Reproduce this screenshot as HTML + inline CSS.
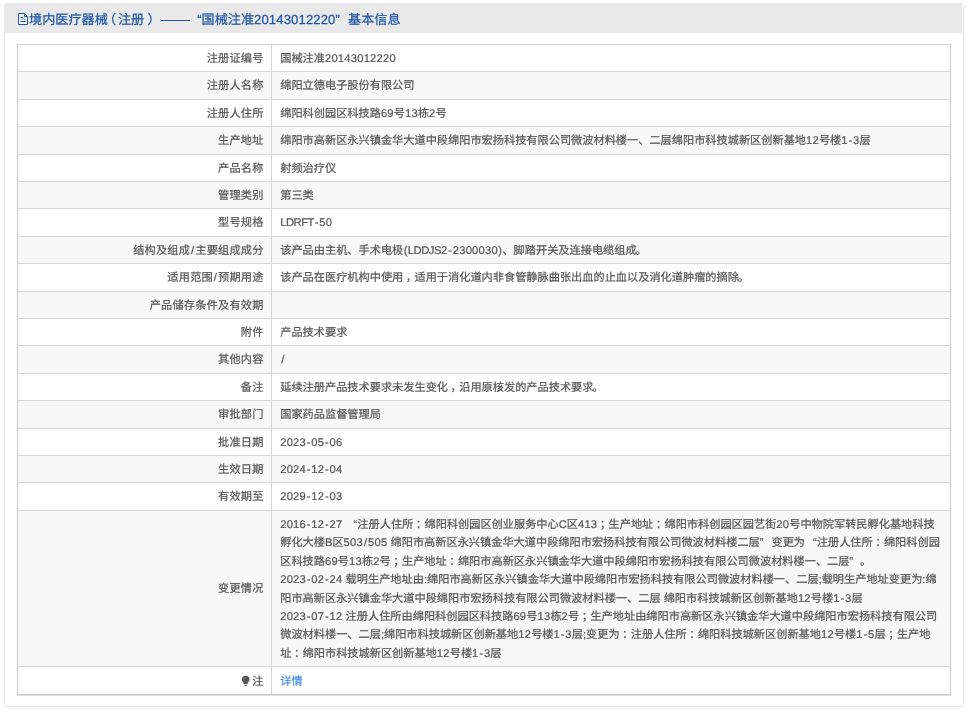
<!DOCTYPE html>
<html lang="zh-CN"><head><meta charset="utf-8"><title>基本信息</title>
<style>
html,body{margin:0;padding:0;background:#fff;}
body{width:972px;height:723px;position:relative;overflow:hidden;font-family:"Liberation Sans",sans-serif;font-size:11.2px;color:#555;text-rendering:geometricPrecision;}
.panel{position:absolute;left:4px;top:3px;width:960px;height:704px;box-sizing:border-box;background:#fff;border:1px solid #ebebeb;border-radius:3px;box-shadow:0 1px 4px rgba(0,0,0,.06);}
.hd{position:absolute;left:5px;top:4px;width:957px;height:29px;background:#e9e9e9;border-radius:2px 2px 0 0;}
.ttl{will-change:transform;-webkit-text-stroke-width:.25px;position:absolute;left:29.2px;top:3px;height:32px;line-height:34.2px;font-size:13.125px;color:#2058a8;white-space:nowrap;}
.row{position:absolute;left:17px;width:934px;border-top:1px solid #d6d6d6;box-sizing:border-box;}
.g{background:#f8f8f8;}
.tx{-webkit-text-stroke-width:.2px;position:absolute;left:0;top:0;width:972px;height:723px;will-change:transform;}
.l,.v{position:absolute;height:18px;line-height:18px;white-space:nowrap;overflow:hidden;}
.l{left:17px;width:246.5px;text-align:right;}
.v{left:280.2px;width:668px;}
.vl{position:absolute;left:271px;top:44px;width:1px;height:651px;background:#d6d6d6;}
.bl{position:absolute;left:17px;top:44px;width:1px;height:651px;background:#cfcfcf;}
.br{position:absolute;left:950px;top:44px;width:1px;height:651px;background:#cfcfcf;}
.bb{position:absolute;left:17px;top:694px;width:934px;height:1px;background:#c9c9c9;border-bottom:1px solid #dedede;}
.ds{display:inline-block;width:29.4px;height:1px;margin-left:.5px;background:#2058a8;vertical-align:3px}
.q{margin-left:8px}.q2{margin-right:8px}
a{color:#4a90e2;text-decoration:none;}
i{font-style:normal;letter-spacing:.23px}s{text-decoration:none;margin:0 1px}tt{font-family:inherit;margin:0 .4px}c{display:inline-block;width:11.2px;text-align:center}.ttl c{width:13.125px}.l c{width:11.4px}
em{font-style:normal;position:relative;left:2.5px}em.k{left:-1.2px}b{font-weight:normal;margin:0 .8px}u{text-decoration:none;letter-spacing:-.45px}
</style></head><body>
<div class="panel"></div><div class="hd"></div>
<div class="ttl"><c>境</c><c>内</c><c>医</c><c>疗</c><c>器</c><c>械</c><c style="position:relative;left:-4.7px;margin-right:-3px">（</c><c>注</c><c>册</c><c style="position:relative;left:3.3px;margin-right:3px">）</c><span class="ds"></span><span style="margin-left:7px">“</span><c>国</c><c>械</c><c>注</c><c>准</c><span style="letter-spacing:.12px">20143012220</span><span style="margin-right:8.2px">”</span><c>基</c><c>本</c><c>信</c><c>息</c></div>
<svg style="position:absolute;left:18px;top:13px" width="10" height="12" viewBox="0 0 10 12"><path d="M0.5 0.5H6.5L9.5 3.5V11.5H0.5Z M6.5 0.5V3.5H9.5" fill="#eef2fb" stroke="#2058a8" stroke-width="1"/><path d="M2.5 4.5H5M2.5 8.5H7.5" stroke="#2058a8" stroke-width="1"/><path d="M2.5 6.5H7.5" stroke="#9db6dc" stroke-width="1"/></svg>

<div class="row" style="top:44px;height:27.4px"></div>
<div class="row g" style="top:71.4px;height:27.4px"></div>
<div class="row" style="top:98.8px;height:27.4px"></div>
<div class="row g" style="top:126.2px;height:27.4px"></div>
<div class="row" style="top:153.6px;height:27.4px"></div>
<div class="row g" style="top:181px;height:27.4px"></div>
<div class="row" style="top:208.4px;height:27.4px"></div>
<div class="row g" style="top:235.8px;height:27.4px"></div>
<div class="row" style="top:263.2px;height:27.4px"></div>
<div class="row g" style="top:290.6px;height:27.4px"></div>
<div class="row" style="top:318px;height:27.4px"></div>
<div class="row g" style="top:345.4px;height:27.4px"></div>
<div class="row" style="top:372.8px;height:27.4px"></div>
<div class="row g" style="top:400.2px;height:27.4px"></div>
<div class="row" style="top:427.6px;height:27.4px"></div>
<div class="row g" style="top:455px;height:27.4px"></div>
<div class="row" style="top:482.4px;height:27.4px"></div>
<div class="row g" style="top:509.8px;height:156.2px"></div>
<div class="row" style="top:666px;height:28px"></div>
<div class="vl"></div><div class="bl"></div><div class="br"></div><div class="bb"></div>
<div class="tx">
<div class="l" style="top:50px"><c>注</c><c>册</c><c>证</c><c>编</c><c>号</c></div>
<div class="v" style="top:50px"><c>国</c><c>械</c><c>注</c><c>准</c><i>20143012220</i></div>
<div class="l" style="top:77px"><c>注</c><c>册</c><c>人</c><c>名</c><c>称</c></div>
<div class="v" style="top:77px"><c>绵</c><c>阳</c><c>立</c><c>德</c><c>电</c><c>子</c><c>股</c><c>份</c><c>有</c><c>限</c><c>公</c><c>司</c></div>
<div class="l" style="top:105px"><c>注</c><c>册</c><c>人</c><c>住</c><c>所</c></div>
<div class="v" style="top:105px"><c>绵</c><c>阳</c><c>科</c><c>创</c><c>园</c><c>区</c><c>科</c><c>技</c><c>路</c><i>69</i><c>号</c><i>13</i><c>栋</c><i>2</i><c>号</c></div>
<div class="l" style="top:132px"><c>生</c><c>产</c><c>地</c><c>址</c></div>
<div class="v" style="top:132px"><c>绵</c><c>阳</c><c>市</c><c>高</c><c>新</c><c>区</c><c>永</c><c>兴</c><c>镇</c><c>金</c><c>华</c><c>大</c><c>道</c><c>中</c><c>段</c><c>绵</c><c>阳</c><c>市</c><c>宏</c><c>扬</c><c>科</c><c>技</c><c>有</c><c>限</c><c>公</c><c>司</c><c>微</c><c>波</c><c>材</c><c>料</c><c>楼</c><c>一</c><c>、</c><c>二</c><c>层</c><c>绵</c><c>阳</c><c>市</c><c>科</c><c>技</c><c>城</c><c>新</c><c>区</c><c>创</c><c>新</c><c>基</c><c>地</c><i>12</i><c>号</c><c>楼</c><i>1</i><b>-</b><i>3</i><c>层</c></div>
<div class="l" style="top:160px"><c>产</c><c>品</c><c>名</c><c>称</c></div>
<div class="v" style="top:160px"><c>射</c><c>频</c><c>治</c><c>疗</c><c>仪</c></div>
<div class="l" style="top:187px"><c>管</c><c>理</c><c>类</c><c>别</c></div>
<div class="v" style="top:187px"><c>第</c><c>三</c><c>类</c></div>
<div class="l" style="top:214px"><c>型</c><c>号</c><c>规</c><c>格</c></div>
<div class="v" style="top:214px"><u>LDRFT</u><b>-</b><i>50</i></div>
<div class="l" style="top:242px"><c>结</c><c>构</c><c>及</c><c>组</c><c>成</c><s>/</s><c>主</c><c>要</c><c>组</c><c>成</c><c>成</c><c>分</c></div>
<div class="v" style="top:242px"><c>该</c><c>产</c><c>品</c><c>由</c><c>主</c><c>机</c><c>、</c><c>手</c><c>术</c><c>电</c><c>极</c><tt>(</tt><u>LDDJS</u><i>2</i><b>-</b><i>2300030</i><tt>)</tt><c>、</c><c>脚</c><c>踏</c><c>开</c><c>关</c><c>及</c><c>连</c><c>接</c><c>电</c><c>缆</c><c>组</c><c>成</c><em class="k"><c>。</c></em></div>
<div class="l" style="top:269px"><c>适</c><c>用</c><c>范</c><c>围</c><s>/</s><c>预</c><c>期</c><c>用</c><c>途</c></div>
<div class="v" style="top:269px"><c>该</c><c>产</c><c>品</c><c>在</c><c>医</c><c>疗</c><c>机</c><c>构</c><c>中</c><c>使</c><c>用</c><em><c>，</c></em><c>适</c><c>用</c><c>于</c><c>消</c><c>化</c><c>道</c><c>内</c><c>非</c><c>食</c><c>管</c><c>静</c><c>脉</c><c>曲</c><c>张</c><c>出</c><c>血</c><c>的</c><c>止</c><c>血</c><c>以</c><c>及</c><c>消</c><c>化</c><c>道</c><c>肿</c><c>瘤</c><c>的</c><c>摘</c><c>除</c><em class="k"><c>。</c></em></div>
<div class="l" style="top:297px"><c>产</c><c>品</c><c>储</c><c>存</c><c>条</c><c>件</c><c>及</c><c>有</c><c>效</c><c>期</c></div>
<div class="l" style="top:324px"><c>附</c><c>件</c></div>
<div class="v" style="top:324px"><c>产</c><c>品</c><c>技</c><c>术</c><c>要</c><c>求</c></div>
<div class="l" style="top:351px"><c>其</c><c>他</c><c>内</c><c>容</c></div>
<div class="v" style="top:351px"><s>/</s></div>
<div class="l" style="top:379px"><c>备</c><c>注</c></div>
<div class="v" style="top:379px"><c>延</c><c>续</c><c>注</c><c>册</c><c>产</c><c>品</c><c>技</c><c>术</c><c>要</c><c>求</c><c>未</c><c>发</c><c>生</c><c>变</c><c>化</c><em><c>，</c></em><c>沿</c><c>用</c><c>原</c><c>核</c><c>发</c><c>的</c><c>产</c><c>品</c><c>技</c><c>术</c><c>要</c><c>求</c><em class="k"><c>。</c></em></div>
<div class="l" style="top:406px"><c>审</c><c>批</c><c>部</c><c>门</c></div>
<div class="v" style="top:406px"><c>国</c><c>家</c><c>药</c><c>品</c><c>监</c><c>督</c><c>管</c><c>理</c><c>局</c></div>
<div class="l" style="top:434px"><c>批</c><c>准</c><c>日</c><c>期</c></div>
<div class="v" style="top:434px"><i>2023</i><b>-</b><i>05</i><b>-</b><i>06</i></div>
<div class="l" style="top:461px"><c>生</c><c>效</c><c>日</c><c>期</c></div>
<div class="v" style="top:461px"><i>2024</i><b>-</b><i>12</i><b>-</b><i>04</i></div>
<div class="l" style="top:488px"><c>有</c><c>效</c><c>期</c><c>至</c></div>
<div class="v" style="top:488px"><i>2029</i><b>-</b><i>12</i><b>-</b><i>03</i></div>
<div class="l" style="top:580px"><c>变</c><c>更</c><c>情</c><c>况</c></div>
<div class="v" style="top:516px"><i>2016</i><b>-</b><i>12</i><b>-</b><i>27</i> <span class="q">“</span><c>注</c><c>册</c><c>人</c><c>住</c><c>所</c><em><c>：</c></em><c>绵</c><c>阳</c><c>科</c><c>创</c><c>园</c><c>区</c><c>创</c><c>业</c><c>服</c><c>务</c><c>中</c><c>心</c>C<c>区</c><i>413</i><em><c>；</c></em><c>生</c><c>产</c><c>地</c><c>址</c><em><c>：</c></em><c>绵</c><c>阳</c><c>市</c><c>科</c><c>创</c><c>园</c><c>区</c><c>园</c><c>艺</c><c>街</c><i>20</i><c>号</c><c>中</c><c>物</c><c>院</c><c>军</c><c>转</c><c>民</c><c>孵</c><c>化</c><c>基</c><c>地</c><c>科</c><c>技</c></div>
<div class="v" style="top:534px"><c>孵</c><c>化</c><c>大</c><c>楼</c>B<c>区</c><i>503</i><s>/</s><i>505</i> <c>绵</c><c>阳</c><c>市</c><c>高</c><c>新</c><c>区</c><c>永</c><c>兴</c><c>镇</c><c>金</c><c>华</c><c>大</c><c>道</c><c>中</c><c>段</c><c>绵</c><c>阳</c><c>市</c><c>宏</c><c>扬</c><c>科</c><c>技</c><c>有</c><c>限</c><c>公</c><c>司</c><c>微</c><c>波</c><c>材</c><c>料</c><c>楼</c><c>二</c><c>层</c><span class="q2">”</span><c>变</c><c>更</c><c>为</c><span class="q">“</span><c>注</c><c>册</c><c>人</c><c>住</c><c>所</c><em><c>：</c></em><c>绵</c><c>阳</c><c>科</c><c>创</c><c>园</c></div>
<div class="v" style="top:553px"><c>区</c><c>科</c><c>技</c><c>路</c><i>69</i><c>号</c><i>13</i><c>栋</c><i>2</i><c>号</c><em><c>；</c></em><c>生</c><c>产</c><c>地</c><c>址</c><em><c>：</c></em><c>绵</c><c>阳</c><c>市</c><c>高</c><c>新</c><c>区</c><c>永</c><c>兴</c><c>镇</c><c>金</c><c>华</c><c>大</c><c>道</c><c>中</c><c>段</c><c>绵</c><c>阳</c><c>市</c><c>宏</c><c>扬</c><c>科</c><c>技</c><c>有</c><c>限</c><c>公</c><c>司</c><c>微</c><c>波</c><c>材</c><c>料</c><c>楼</c><c>一</c><c>、</c><c>二</c><c>层</c><span class="q2">”</span><em class="k"><c>。</c></em></div>
<div class="v" style="top:571px"><i>2023</i><b>-</b><i>02</i><b>-</b><i>24</i> <c>载</c><c>明</c><c>生</c><c>产</c><c>地</c><c>址</c><c>由</c>:<c>绵</c><c>阳</c><c>市</c><c>高</c><c>新</c><c>区</c><c>永</c><c>兴</c><c>镇</c><c>金</c><c>华</c><c>大</c><c>道</c><c>中</c><c>段</c><c>绵</c><c>阳</c><c>市</c><c>宏</c><c>扬</c><c>科</c><c>技</c><c>有</c><c>限</c><c>公</c><c>司</c><c>微</c><c>波</c><c>材</c><c>料</c><c>楼</c><c>一</c><c>、</c><c>二</c><c>层</c>;<c>载</c><c>明</c><c>生</c><c>产</c><c>地</c><c>址</c><c>变</c><c>更</c><c>为</c>:<c>绵</c></div>
<div class="v" style="top:590px"><c>阳</c><c>市</c><c>高</c><c>新</c><c>区</c><c>永</c><c>兴</c><c>镇</c><c>金</c><c>华</c><c>大</c><c>道</c><c>中</c><c>段</c><c>绵</c><c>阳</c><c>市</c><c>宏</c><c>扬</c><c>科</c><c>技</c><c>有</c><c>限</c><c>公</c><c>司</c><c>微</c><c>波</c><c>材</c><c>料</c><c>楼</c><c>一</c><c>、</c><c>二</c><c>层</c> <c>绵</c><c>阳</c><c>市</c><c>科</c><c>技</c><c>城</c><c>新</c><c>区</c><c>创</c><c>新</c><c>基</c><c>地</c><i>12</i><c>号</c><c>楼</c><i>1</i><b>-</b><i>3</i><c>层</c></div>
<div class="v" style="top:608px"><i>2023</i><b>-</b><i>07</i><b>-</b><i>12</i> <c>注</c><c>册</c><c>人</c><c>住</c><c>所</c><c>由</c><c>绵</c><c>阳</c><c>科</c><c>创</c><c>园</c><c>区</c><c>科</c><c>技</c><c>路</c><i>69</i><c>号</c><i>13</i><c>栋</c><i>2</i><c>号</c><em><c>；</c></em><c>生</c><c>产</c><c>地</c><c>址</c><c>由</c><c>绵</c><c>阳</c><c>市</c><c>高</c><c>新</c><c>区</c><c>永</c><c>兴</c><c>镇</c><c>金</c><c>华</c><c>大</c><c>道</c><c>中</c><c>段</c><c>绵</c><c>阳</c><c>市</c><c>宏</c><c>扬</c><c>科</c><c>技</c><c>有</c><c>限</c><c>公</c><c>司</c></div>
<div class="v" style="top:626px"><c>微</c><c>波</c><c>材</c><c>料</c><c>楼</c><c>一</c><c>、</c><c>二</c><c>层</c>;<c>绵</c><c>阳</c><c>市</c><c>科</c><c>技</c><c>城</c><c>新</c><c>区</c><c>创</c><c>新</c><c>基</c><c>地</c><i>12</i><c>号</c><c>楼</c><i>1</i><b>-</b><i>3</i><c>层</c>;<c>变</c><c>更</c><c>为</c><em><c>：</c></em><c>注</c><c>册</c><c>人</c><c>住</c><c>所</c><em><c>：</c></em><c>绵</c><c>阳</c><c>科</c><c>技</c><c>城</c><c>新</c><c>区</c><c>创</c><c>新</c><c>基</c><c>地</c><i>12</i><c>号</c><c>楼</c><i>1</i><b>-</b><i>5</i><c>层</c><em><c>；</c></em><c>生</c><c>产</c><c>地</c></div>
<div class="v" style="top:645px"><c>址</c><em><c>：</c></em><c>绵</c><c>阳</c><c>市</c><c>科</c><c>技</c><c>城</c><c>新</c><c>区</c><c>创</c><c>新</c><c>基</c><c>地</c><i>12</i><c>号</c><c>楼</c><i>1</i><b>-</b><i>3</i><c>层</c></div>
<div class="l" style="top:673px"><c>注</c></div>
<div class="v" style="top:673px"><a><c>详</c><c>情</c></a></div>
<svg style="position:absolute;left:241px;top:675px" width="10" height="12" viewBox="0 0 10 12"><path d="M4.7 0.8C2.4 0.8 0.8 2.5 0.8 4.5C0.8 6 1.7 6.9 2.5 7.8L3 9.3H6.4L6.9 7.8C7.7 6.9 8.6 6 8.6 4.5C8.6 2.5 7 0.8 4.7 0.8Z" fill="#555"/><path d="M3.3 10.1H6.1L5.6 11H3.8Z" fill="#666"/><path d="M2.6 4.2C2.7 3.2 3.4 2.5 4.4 2.4" stroke="#999" stroke-width=".9" fill="none"/></svg>
</div>
</body></html>
